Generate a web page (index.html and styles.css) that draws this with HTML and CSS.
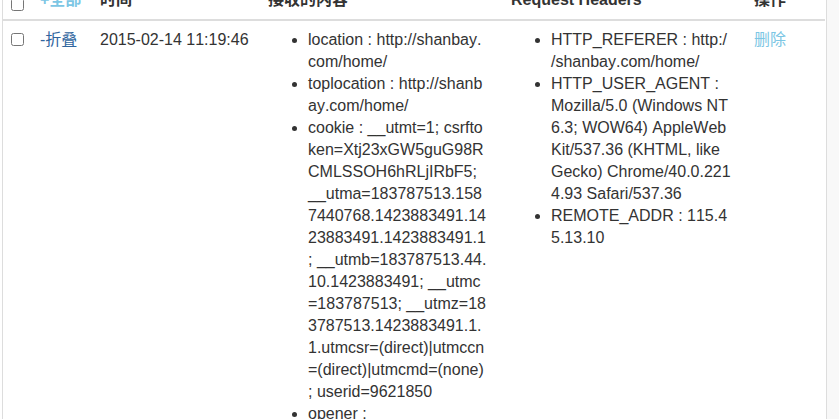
FILE: index.html
```html
<!DOCTYPE html>
<html lang="zh-CN">
<head>
<meta charset="utf-8">
<title>Requests</title>
<link rel="stylesheet" href="styles.css">
</head>
<body>
<div class="page">
  <div class="main">
    <table class="log-table">
      <colgroup>
        <col class="c-check">
        <col class="c-toggle">
        <col class="c-time">
        <col class="c-content">
        <col class="c-headers">
        <col class="c-ops">
      </colgroup>
      <thead>
        <tr>
          <th><input type="checkbox" class="chk chk-head"></th>
          <th><a href="#" class="link-light">+全部</a></th>
          <th>时间</th>
          <th>接收的内容</th>
          <th>Request Headers</th>
          <th>操作</th>
        </tr>
      </thead>
      <tbody>
        <tr>
          <td><input type="checkbox" class="chk"></td>
          <td><a href="#" class="link-dark">-折叠</a></td>
          <td class="time">2015-02-14 11:19:46</td>
          <td class="wrap">
            <ul class="kv">
              <li>location : http://shanbay.com/home/</li>
              <li>toplocation : http://shanbay.com/home/</li>
              <li>cookie : __utmt=1; csrftoken=Xtj23xGW5guG98RCMLSSOH6hRLjIRbF5; __utma=183787513.1587440768.1423883491.1423883491.1423883491.1; __utmb=183787513.44.10.1423883491; __utmc=183787513; __utmz=183787513.1423883491.1.1.utmcsr=(direct)|utmccn=(direct)|utmcmd=(none); userid=9621850</li>
              <li>opener : </li>
              <li>title : 扇贝网</li>
            </ul>
          </td>
          <td class="wrap">
            <ul class="kv">
              <li>HTTP_REFERER : http://shanbay.com/home/</li>
              <li>HTTP_USER_AGENT : Mozilla/5.0 (Windows NT 6.3; WOW64) AppleWebKit/537.36 (KHTML, like Gecko) Chrome/40.0.2214.93 Safari/537.36</li>
              <li>REMOTE_ADDR : 115.45.13.10</li>
            </ul>
          </td>
          <td><a href="#" class="link-light">删除</a></td>
        </tr>
      </tbody>
    </table>
  </div>
  <div class="aside"></div>
</div>
</body>
</html>
```
FILE: styles.css
```css
html, body {
  margin: 0;
  padding: 0;
  background: #fff;
}
body {
  font-family: "Liberation Sans", Arial, "Noto Sans CJK SC", sans-serif;
  font-size: 16px;
  line-height: 22px;
  color: #333;
  font-kerning: none;
  overflow: hidden;
}
.page {
  display: flex;
  align-items: stretch;
  min-height: 460px;
  margin-top: -19px;
  padding-left: 2px;
}
.main {
  flex: none;
  width: 823px;
  border-left: 1px solid #ddd;
  border-right: 1px solid #ddd;
}
.aside {
  flex: 1;
  background: #f8f8f8;
}
.log-table {
  width: 822px;
  table-layout: fixed;
  border-collapse: collapse;
  border-spacing: 0;
}
.c-check { width: 29px; }
.c-toggle { width: 60px; }
.c-time { width: 168px; }
.c-content { width: 243px; }
.c-headers { width: 243px; }
.c-ops { width: 79px; }
.log-table th,
.log-table td {
  padding: 8px;
  text-align: left;
  vertical-align: top;
}
.log-table th {
  font-weight: bold;
  vertical-align: bottom;
  border-bottom: 2px solid #ddd;
}
.chk {
  display: block;
  margin: 4px 0 0;
  width: 13px;
  height: 13px;
}
.chk-head {
  margin-top: 7px;
}
.time {
  white-space: nowrap;
}
.wrap {
  word-break: break-all;
  line-break: anywhere;
  overflow-wrap: anywhere;
}
.kv {
  margin: 0 0 10px;
  padding-left: 40px;
  padding-right: 7px;
}
a {
  text-decoration: none;
}
.link-light {
  color: #7cc6e4;
}
.link-dark {
  color: #30659e;
}
```
